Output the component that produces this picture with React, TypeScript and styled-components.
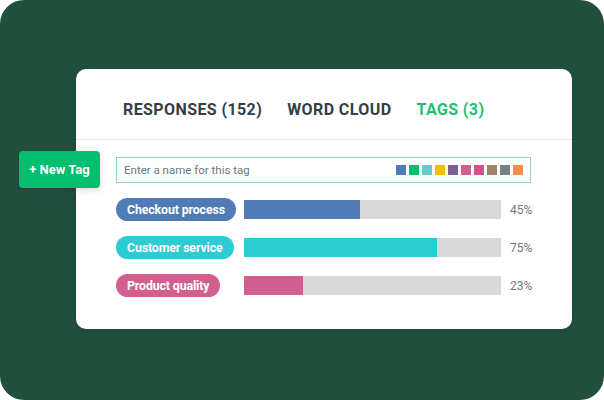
import React from 'react'
import styled, { createGlobalStyle } from 'styled-components'

const GlobalStyle = createGlobalStyle`
  html, body {
    margin: 0;
    padding: 0;
    background: #ffffff;
  }
  body {
    font-family: Roboto, "Liberation Sans", Arial, sans-serif;
  }
`

const Stage = styled.div`
  width: 604px;
  height: 400px;
  box-sizing: border-box;
  background: #22503f;
  border-radius: 24px;
  padding: 69px 32px 0 76px;
`

const Card = styled.div`
  position: relative;
  width: 496px;
  height: 260px;
  background: #ffffff;
  border-radius: 10px;
  box-shadow: 0 2px 10px rgba(0, 0, 0, 0.12);
`

const Tabs = styled.div`
  display: flex;
  align-items: center;
  gap: 25px;
  height: 60px;
  padding: 10px 0 0 47px;
  border-bottom: 1px solid #ebebeb;
`

const Tab = styled.div<{ active?: boolean }>`
  font-size: 16px;
  font-weight: 700;
  letter-spacing: 0.4px;
  color: ${({ active }) => (active ? '#1dbf73' : '#333e48')};
`

const Body = styled.div`
  display: flex;
  flex-direction: column;
  padding: 17px 0 0 40px;
`

const NewTag = styled.button`
  position: absolute;
  left: -57px;
  top: 82px;
  width: 81px;
  height: 37px;
  border: none;
  border-radius: 4px;
  background: #00bf6f;
  color: #ffffff;
  font-family: inherit;
  font-size: 13px;
  font-weight: 700;
  box-shadow: 0 2px 6px rgba(0, 0, 0, 0.15);
`

const InputBox = styled.div`
  display: flex;
  align-items: center;
  justify-content: space-between;
  box-sizing: border-box;
  width: 415px;
  height: 26px;
  border: 1px solid #8fd3c9;
  padding: 0 7px;
  margin-bottom: 15px;
`

const Placeholder = styled.span`
  font-size: 11.5px;
  color: #6b787f;
`

const Swatches = styled.div`
  display: flex;
  gap: 3px;
`

const Swatch = styled.span<{ color: string }>`
  width: 10px;
  height: 10px;
  background: ${({ color }) => color};
`

const Rows = styled.div`
  display: flex;
  flex-direction: column;
  gap: 15px;
`

const Row = styled.div`
  display: flex;
  align-items: center;
  height: 23px;
`

const PillCell = styled.div`
  width: 128px;
  flex-shrink: 0;
`

const Pill = styled.span<{ color: string }>`
  display: inline-flex;
  align-items: center;
  height: 23px;
  padding: 0 11px;
  border-radius: 12px;
  background: ${({ color }) => color};
  color: #ffffff;
  font-size: 12.3px;
  font-weight: 700;
  letter-spacing: -0.1px;
`

const Track = styled.div`
  width: 257px;
  height: 19px;
  background: #d9d9d9;
  display: flex;
`

const Fill = styled.div<{ color: string }>`
  height: 100%;
  background: ${({ color }) => color};
`

const Pct = styled.span`
  margin-left: 9px;
  font-size: 12px;
  color: #6b787f;
`

const swatches = [
  '#507cb6',
  '#00bf6f',
  '#6bc8cd',
  '#f9be00',
  '#7d5e90',
  '#d25f90',
  '#db4d8a',
  '#a28468',
  '#768086',
  '#f78b4b',
]

const tags = [
  { name: 'Checkout process', color: '#507cb6', pct: 45 },
  { name: 'Customer service', color: '#2dccd3', pct: 75 },
  { name: 'Product quality', color: '#d25f90', pct: 23 },
]

const App = () => {
  return (
    <>
      <GlobalStyle />
      <Stage>
        <Card>
          <Tabs>
            <Tab>RESPONSES (152)</Tab>
            <Tab>WORD CLOUD</Tab>
            <Tab active>TAGS (3)</Tab>
          </Tabs>
          <NewTag>+ New Tag</NewTag>
          <Body>
            <InputBox>
              <Placeholder>Enter a name for this tag</Placeholder>
              <Swatches>
                {swatches.map((c) => (
                  <Swatch key={c} color={c} />
                ))}
              </Swatches>
            </InputBox>
            <Rows>
              {tags.map((t) => (
                <Row key={t.name}>
                  <PillCell>
                    <Pill color={t.color}>{t.name}</Pill>
                  </PillCell>
                  <Track>
                    <Fill color={t.color} style={{ width: `${t.pct}%` }} />
                  </Track>
                  <Pct>{t.pct}%</Pct>
                </Row>
              ))}
            </Rows>
          </Body>
        </Card>
      </Stage>
    </>
  )
}

export default App
